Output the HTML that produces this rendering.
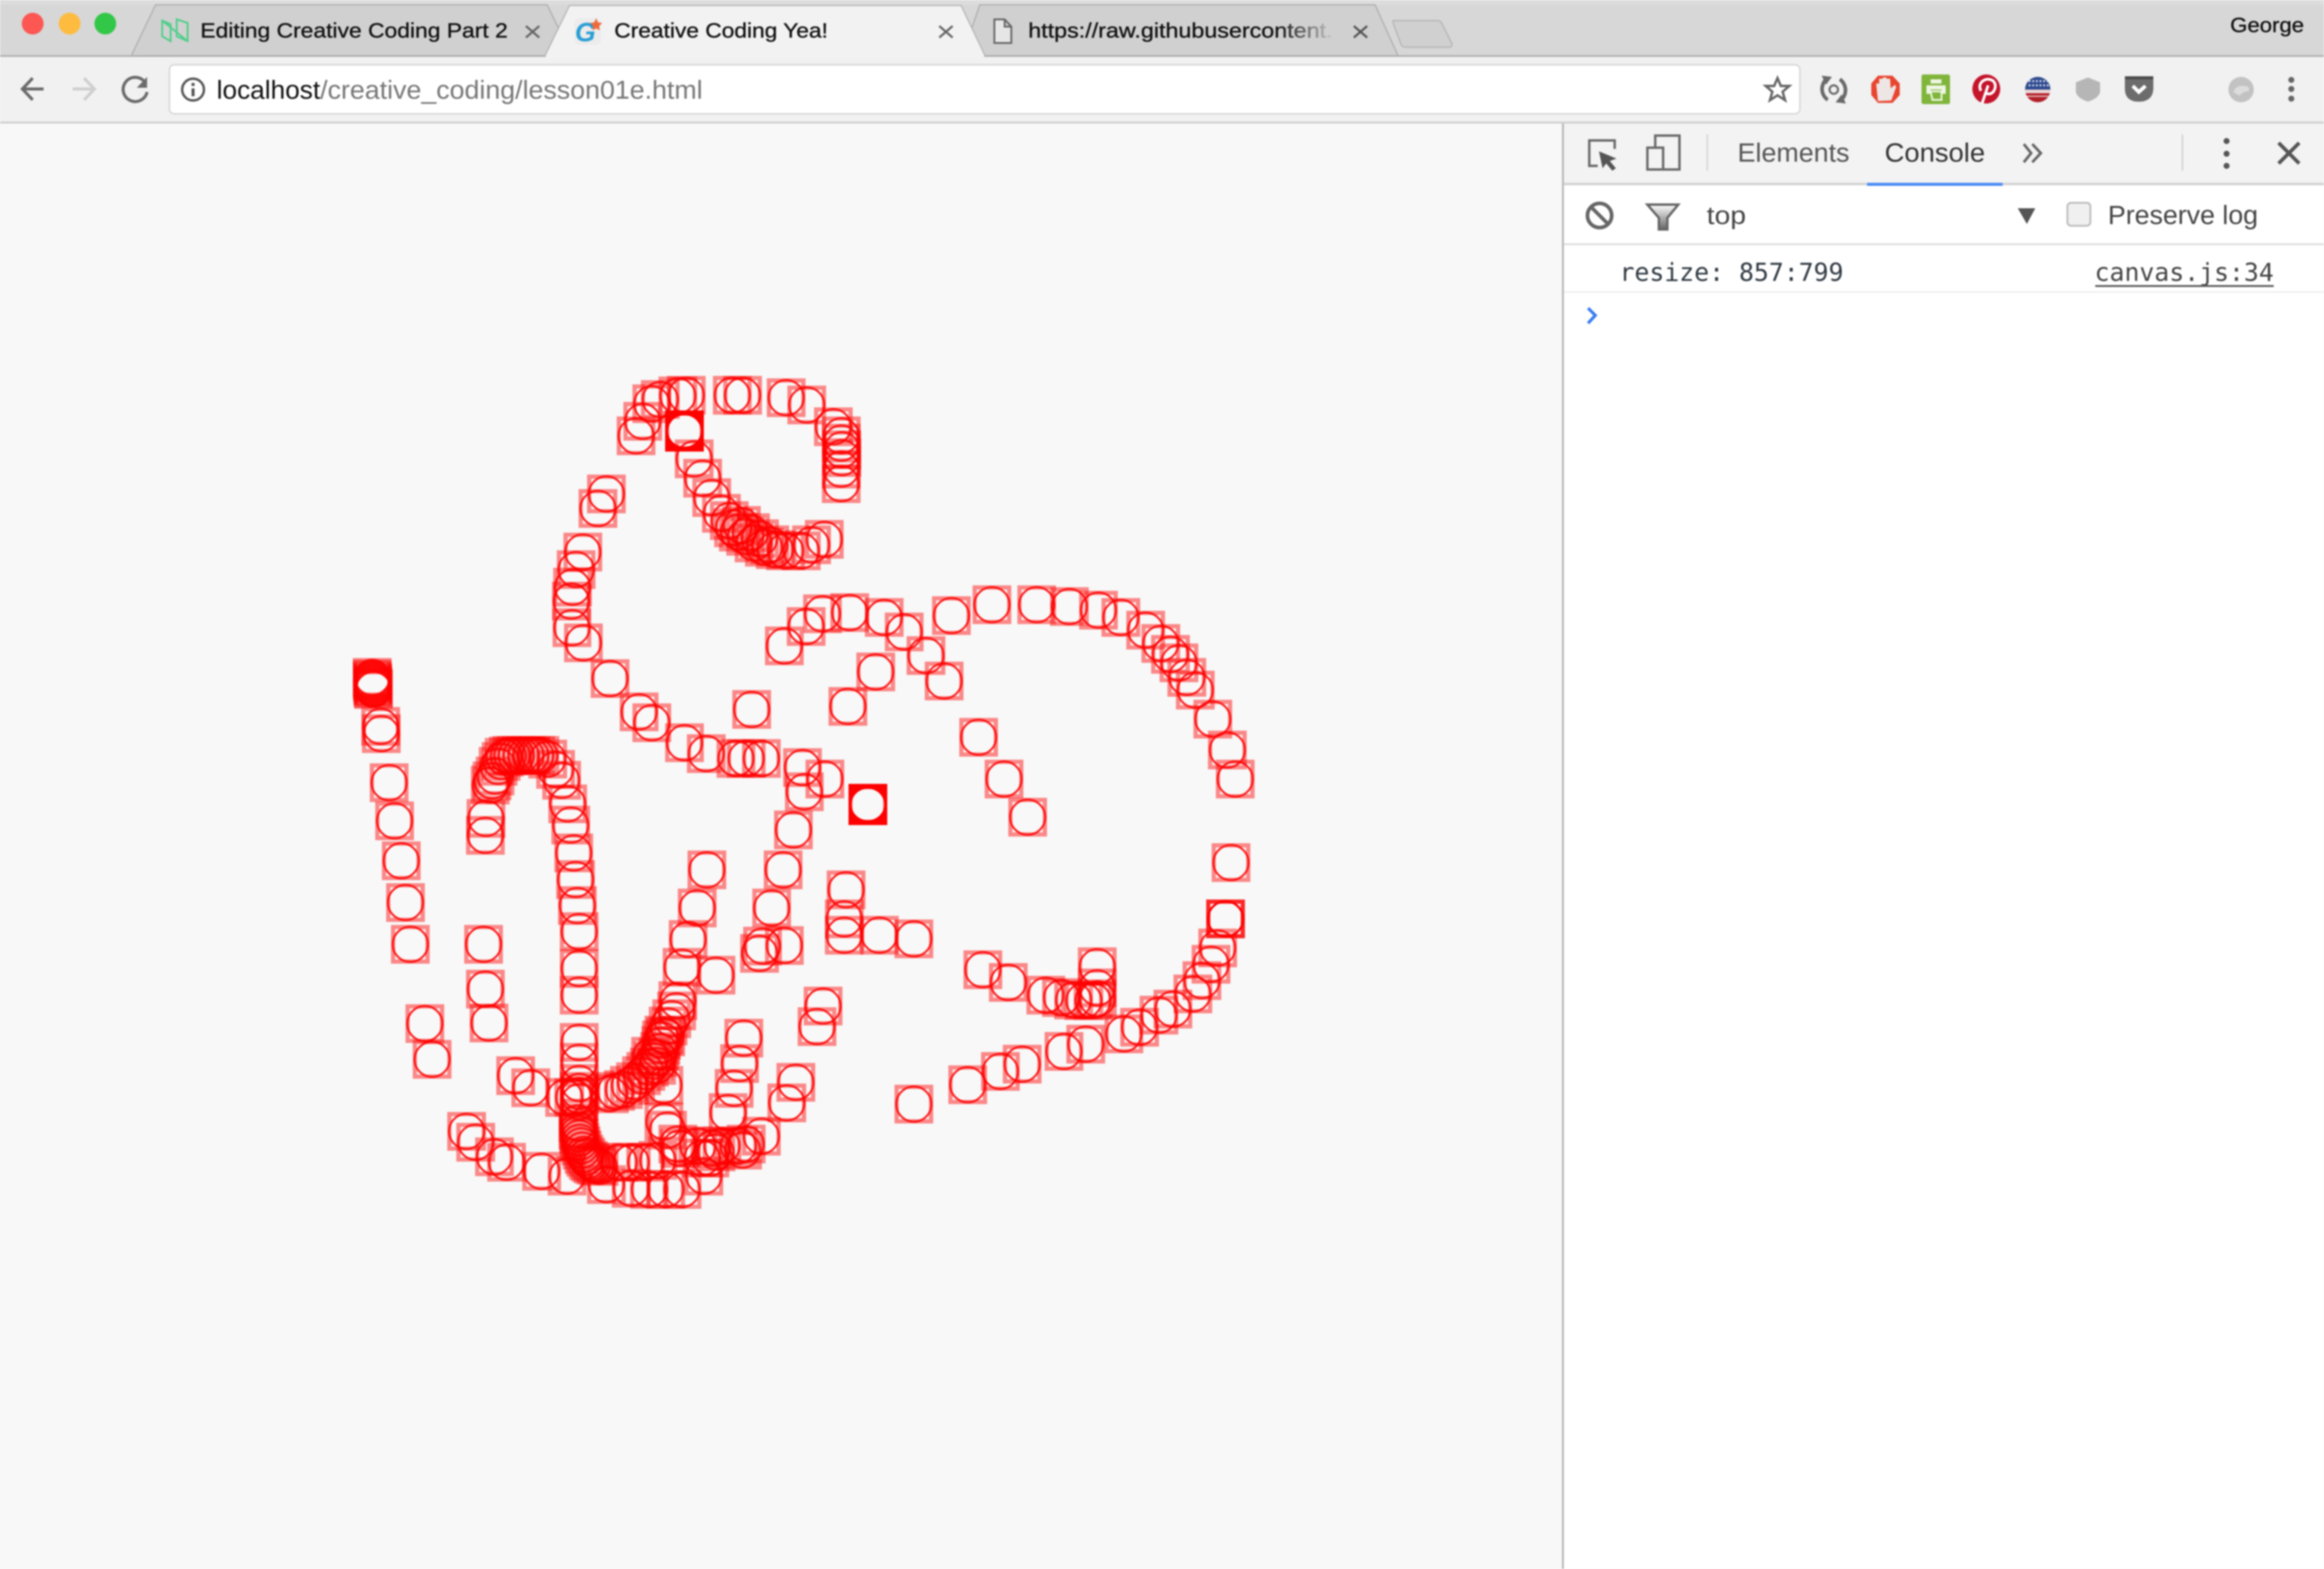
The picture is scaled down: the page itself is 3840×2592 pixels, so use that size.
<!DOCTYPE html>
<html><head><meta charset="utf-8"><title>Creative Coding Yea!</title>
<style>
html,body{margin:0;padding:0;background:#f8f8f8;width:3840px;height:2592px;overflow:hidden}
svg{display:block;filter:blur(1.2px)}
text{font-family:"Liberation Sans",sans-serif}
.mono{font-family:"DejaVu Sans Mono","Liberation Mono",monospace}
.t{stroke:#111;stroke-width:.5px}
</style></head><body>
<svg xmlns="http://www.w3.org/2000/svg" width="3840" height="2592" viewBox="0 0 3840 2592">
<defs>
<g id="m"><rect x="-28.5" y="-28.5" width="57" height="57" fill="none" stroke="#ff0000" stroke-opacity=".45" stroke-width="7"/><circle r="29" fill="none" stroke="#ff0000" stroke-opacity=".85" stroke-width="3.5"/></g>
<path id="b" fill-rule="evenodd" fill="#ff0000" d="M-32 -34 H32 V34 H-32 Z M-27 0 A27 26 0 1 0 27 0 A27 26 0 1 0 -27 0 Z"/>
<linearGradient id="fade" gradientUnits="userSpaceOnUse" x1="2110" x2="2205" y1="0" y2="0"><stop offset="0" stop-color="#111"/><stop offset="1" stop-color="#111" stop-opacity="0"/></linearGradient>
<linearGradient id="fn" x1="0" y1="0" x2="0" y2="1"><stop offset="0" stop-color="#fff"/><stop offset="1" stop-color="#666"/></linearGradient>
<clipPath id="us"><circle cx="3367" cy="148" r="21"/></clipPath>
</defs>

<!-- page background -->
<rect width="3840" height="2592" fill="#f8f8f8"/>

<!-- tab strip -->
<rect width="3840" height="93" fill="#d7d7d7"/>
<rect y="0" width="3840" height="8" fill="#dcdcdc"/>
<rect y="91" width="3840" height="3" fill="#b2b2b2"/>
<rect y="94" width="3840" height="108" fill="#f1f1f1"/>
<rect y="201" width="3840" height="3" fill="#cdcdcd"/>

<!-- traffic lights -->
<circle cx="54" cy="39" r="18" fill="#fc5753"/>
<circle cx="115" cy="39" r="18" fill="#fdbc40"/>
<circle cx="174" cy="39" r="18" fill="#33c748"/>

<!-- tabs -->
<path d="M217 92 L257 8 H904 L945 92 Z" fill="#d0d0d0" stroke="#adadad" stroke-width="2"/>
<path d="M1590 92 L1619 8 H2272 L2310 92 Z" fill="#d0d0d0" stroke="#adadad" stroke-width="2"/>
<path d="M900 93 L941 9 H1588 L1628 93 Z" fill="#f2f2f2" stroke="#b5b5b5" stroke-width="2"/>
<rect x="902" y="91" width="724" height="4" fill="#f2f2f2"/>
<path d="M2302 34 H2375 Q2381 34 2383 40 L2399 72 Q2400 78 2394 78 H2322 Q2317 78 2315 73 L2302 39 Z" fill="#d0d0d0" stroke="#b3b3b3" stroke-width="2"/>

<!-- favicon 1 -->
<g fill="none" stroke="#4fce8a" stroke-width="3"><path d="M268 34 V60 L282 68 V40 Z"/><path d="M310 38 V68 L292 60 V32 Z"/><path d="M268 34 L310 68"/></g>
<text class="t" x="331" y="62" font-size="34" fill="#111" textLength="508" lengthAdjust="spacingAndGlyphs">Editing Creative Coding Part 2</text>
<path d="M869 43 L891 62 M891 43 L869 62" stroke="#666" stroke-width="3.5"/>

<!-- favicon 2 -->
<rect x="949" y="30" width="44" height="44" rx="8" fill="#ececec"/>
<text x="950" y="68" font-size="44" font-weight="bold" font-style="italic" fill="#2a9fd6">G</text>
<path d="M985 30 l3 7 7 1 -5 5 1 7 -6 -3 -6 3 1 -7 -5 -5 7 -1z" fill="#ef6a3a"/>
<text class="t" x="1015" y="62" font-size="34" fill="#111" textLength="353" lengthAdjust="spacingAndGlyphs">Creative Coding Yea!</text>
<path d="M1552 43 L1574 62 M1574 43 L1552 62" stroke="#666" stroke-width="3.5"/>

<!-- tab 3 -->
<path d="M1643 32 H1660 L1671 44 V71 H1643 Z M1660 32 V44 H1671" fill="#e6e6e6" stroke="#666" stroke-width="3"/>
<text x="1699" y="62" font-size="34" fill="url(#fade)" stroke="url(#fade)" stroke-width=".5" textLength="522" lengthAdjust="spacingAndGlyphs">https://raw.githubusercontent.c</text>
<path d="M2237 43 L2259 62 M2259 43 L2237 62" stroke="#555" stroke-width="3.5"/>
<text class="t" x="3685" y="53" font-size="34" fill="#111" textLength="122" lengthAdjust="spacingAndGlyphs">George</text>

<!-- nav buttons -->
<path d="M72 147 H39 M54 129 L37 147 L54 165" fill="none" stroke="#6b6b6b" stroke-width="5"/>
<path d="M120 147 H154 M139 129 L156 147 L139 165" fill="none" stroke="#cfcfcf" stroke-width="5"/>
<path d="M238 134 A20 20 0 1 0 243 152" fill="none" stroke="#6b6b6b" stroke-width="5"/>
<path d="M243 127 V145 H226 Z" fill="#6b6b6b"/>

<!-- omnibox -->
<rect x="280" y="107" width="2694" height="81" rx="8" fill="#fff" stroke="#d6d6d6" stroke-width="2.5"/>
<circle cx="319" cy="148" r="18" fill="none" stroke="#555" stroke-width="4"/>
<rect x="316.500" y="146" width="5" height="13" fill="#555"/><rect x="316.500" y="137" width="5" height="5" fill="#555"/>
<text x="358" y="163" font-size="43" fill="#111" textLength="171" lengthAdjust="spacingAndGlyphs">localhost</text>
<text x="529" y="163" font-size="43" fill="#777" textLength="632" lengthAdjust="spacingAndGlyphs">/creative_coding/lesson01e.html</text>
<path d="M2937 129 l5.500 13 h14 l-11 9.500 4 14 -12.500 -8 -12.500 8 4 -14 -11 -9.500 h14z" fill="none" stroke="#666" stroke-width="4"/>

<!-- extensions -->
<g fill="none" stroke="#6a6a6a" stroke-width="6"><path d="M3020 129 A22 22 0 0 0 3020 165"/><path d="M3040 167 A22 22 0 0 0 3040 131"/><circle cx="3030" cy="148" r="7" stroke-width="3.500"/></g>
<path d="M3010 125 l17 2 -10 13z M3050 171 l-17 -2 10 -13z" fill="#6a6a6a"/>
<path d="M3103 125 H3127 L3139 138 V157 L3127 170 H3103 L3092 157 V138 Z" fill="#e8452f"/>
<path d="M3103 167 L3100 138 H3105 V130 H3111 V128 H3117 V130 H3123 L3124 146 L3131 140 L3133 144 L3125 166 Z" fill="#eee6e4"/>
<rect x="3175" y="123" width="47" height="49" rx="3" fill="#7fb53a"/>
<path d="M3190 131 H3208 V138 H3190 Z M3183 141 H3215 V155 H3208 V148 H3190 V155 H3183 Z" fill="#eef5e4"/>
<path d="M3190 151 H3208 V165 H3193 Z" fill="none" stroke="#eef5e4" stroke-width="3"/>
<ellipse cx="3282" cy="147" rx="23" ry="24" fill="#c5142c"/>
<path d="M3275 171 L3285 141" stroke="#fff" stroke-width="4.500" fill="none"/>
<path d="M3273 150 C3267 137 3279 130 3286 131 C3298 132 3299 144 3294 151 C3289 157 3283 156 3281 152" stroke="#fff" stroke-width="4.500" fill="none"/>
<g clip-path="url(#us)">
<rect x="3340" y="120" width="60" height="30" fill="#2f4a8f"/>
<rect x="3340" y="148" width="60" height="6" fill="#ead6d6"/>
<rect x="3340" y="154" width="60" height="16" fill="#b3202a"/>
<rect x="3340" y="158" width="60" height="2" fill="#e8c8c8"/>
<path d="M3352 141 h36" stroke="#dfe5f2" stroke-width="3" stroke-dasharray="3 3"/>
<path d="M3352 134 h36" stroke="#dfe5f2" stroke-width="3" stroke-dasharray="3 3"/>
</g>
<path d="M3450 128 L3470 136 V152 Q3468 162 3450 168 Q3432 162 3430 152 V136 Z" fill="#b6b6b6"/>
<path d="M3511 130 Q3511 126 3515 126 H3554 Q3558 126 3558 130 V148 Q3556 168 3534 168 Q3512 168 3511 148 Z" fill="#6c6c6c"/>
<rect x="3511" y="126" width="47" height="5" fill="#4b4b4b"/>
<path d="M3524 142 L3534 152 L3545 142" fill="none" stroke="#fff" stroke-width="6"/>
<circle cx="3703" cy="148" r="21" fill="#c2c2c2"/>
<path d="M3690 152 Q3695 140 3708 142 Q3718 142 3716 150 Q3706 152 3700 158 Z" fill="#dcdcdc"/>
<circle cx="3786" cy="132" r="5" fill="#666"/><circle cx="3786" cy="147" r="5" fill="#666"/><circle cx="3786" cy="163" r="5" fill="#666"/>

<!-- canvas markers -->
<g id="markers">
<use href="#m" x="1051" y="720"/><use href="#m" x="1062" y="696"/><use href="#m" x="1077" y="667"/><use href="#m" x="1091" y="660"/><use href="#m" x="1120" y="654"/><use href="#m" x="1134" y="653"/>
<use href="#m" x="1210" y="653"/><use href="#m" x="1227" y="653"/><use href="#m" x="1299" y="657"/><use href="#m" x="1333" y="669"/><use href="#m" x="1377" y="705"/><use href="#m" x="1390" y="720"/><use href="#m" x="1390" y="732"/><use href="#m" x="1391" y="743"/><use href="#m" x="1391" y="756"/><use href="#m" x="1390" y="775"/><use href="#m" x="1390" y="799"/>
<use href="#b" x="1131" y="712"/><use href="#m" x="1131" y="712"/>
<use href="#m" x="1147" y="758"/><use href="#m" x="1161" y="790"/><use href="#m" x="1176" y="822"/><use href="#m" x="1192" y="848"/><use href="#m" x="1205" y="860"/><use href="#m" x="1212" y="872"/><use href="#m" x="1220" y="879"/><use href="#m" x="1225" y="868"/><use href="#m" x="1232" y="886"/><use href="#m" x="1240" y="880"/><use href="#m" x="1246" y="897"/><use href="#m" x="1255" y="890"/><use href="#m" x="1263" y="904"/><use href="#m" x="1272" y="900"/><use href="#m" x="1281" y="908"/><use href="#m" x="1298" y="910"/><use href="#m" x="1324" y="910"/><use href="#m" x="1341" y="900"/><use href="#m" x="1362" y="891"/>
<use href="#m" x="1002" y="816"/><use href="#m" x="988" y="840"/><use href="#m" x="963" y="912"/><use href="#m" x="952" y="941"/><use href="#m" x="946" y="970"/><use href="#m" x="944" y="993"/><use href="#m" x="945" y="1037"/><use href="#m" x="964" y="1062"/><use href="#m" x="1008" y="1121"/><use href="#m" x="1056" y="1176"/><use href="#m" x="1077" y="1194"/><use href="#m" x="1131" y="1227"/><use href="#m" x="1167" y="1245"/><use href="#m" x="1216" y="1253"/><use href="#m" x="1233" y="1253"/><use href="#m" x="1258" y="1253"/><use href="#m" x="1326" y="1268"/><use href="#m" x="1363" y="1287"/><use href="#m" x="1329" y="1308"/>
<use href="#b" x="1434" y="1329"/><use href="#m" x="1434" y="1329"/>
<use href="#m" x="1311" y="1371"/><use href="#m" x="1294" y="1437"/><use href="#m" x="1275" y="1500"/><use href="#m" x="1296" y="1562"/><use href="#m" x="1260" y="1563"/><use href="#m" x="1255" y="1575"/>
<use href="#m" x="1168" y="1437"/><use href="#m" x="1152" y="1500"/><use href="#m" x="1137" y="1552"/><use href="#m" x="1127" y="1598"/><use href="#m" x="1183" y="1611"/>
<use href="#m" x="1296" y="1067"/><use href="#m" x="1332" y="1035"/><use href="#m" x="1359" y="1014"/><use href="#m" x="1404" y="1012"/><use href="#m" x="1461" y="1020"/><use href="#m" x="1494" y="1044"/><use href="#m" x="1530" y="1083"/><use href="#m" x="1560" y="1125"/><use href="#m" x="1447" y="1110"/><use href="#m" x="1401" y="1167"/><use href="#m" x="1242" y="1172"/>
<use href="#m" x="1572" y="1017"/><use href="#m" x="1639" y="999"/><use href="#m" x="1713" y="999"/><use href="#m" x="1767" y="1002"/><use href="#m" x="1815" y="1008"/><use href="#m" x="1852" y="1020"/><use href="#m" x="1893" y="1041"/><use href="#m" x="1918" y="1063"/><use href="#m" x="1934" y="1081"/><use href="#m" x="1948" y="1095"/><use href="#m" x="1961" y="1119"/><use href="#m" x="1975" y="1140"/><use href="#m" x="2004" y="1188"/><use href="#m" x="2028" y="1239"/><use href="#m" x="2041" y="1287"/>
<use href="#m" x="1617" y="1218"/><use href="#m" x="1659" y="1287"/><use href="#m" x="1698" y="1350"/><use href="#m" x="2034" y="1425"/><use href="#m" x="2025" y="1518"/><use href="#m" x="2025" y="1518"/><use href="#m" x="2025" y="1518"/><use href="#m" x="2012" y="1566"/><use href="#m" x="2001" y="1593"/><use href="#m" x="1986" y="1620"/><use href="#m" x="1971" y="1642"/><use href="#m" x="1938" y="1667"/><use href="#m" x="1915" y="1677"/><use href="#m" x="1883" y="1697"/><use href="#m" x="1857" y="1708"/><use href="#m" x="1794" y="1725"/><use href="#m" x="1758" y="1737"/><use href="#m" x="1689" y="1758"/><use href="#m" x="1653" y="1770"/><use href="#m" x="1599" y="1792"/><use href="#m" x="1510" y="1824"/>
<use href="#m" x="1624" y="1602"/><use href="#m" x="1666" y="1623"/><use href="#m" x="1728" y="1644"/><use href="#m" x="1754" y="1648"/><use href="#m" x="1774" y="1652"/><use href="#m" x="1791" y="1653"/><use href="#m" x="1806" y="1653"/><use href="#m" x="1813" y="1597"/><use href="#m" x="1813" y="1632"/><use href="#m" x="1813" y="1650"/>
<use href="#m" x="1360" y="1662"/><use href="#m" x="1350" y="1696"/><use href="#m" x="1510" y="1551"/><use href="#m" x="1453" y="1545"/><use href="#m" x="1395" y="1545"/><use href="#m" x="1398" y="1470"/><use href="#m" x="1395" y="1518"/>
<use href="#m" x="1315" y="1788"/><use href="#m" x="1300" y="1822"/><use href="#m" x="1229" y="1715"/><use href="#m" x="1222" y="1757"/><use href="#m" x="1213" y="1798"/><use href="#m" x="1203" y="1838"/>
<use href="#m" x="615" y="1119"/><use href="#m" x="615" y="1122"/><use href="#m" x="615" y="1125"/><use href="#m" x="616" y="1128"/><use href="#m" x="616" y="1131"/><use href="#m" x="616" y="1134"/><use href="#m" x="617" y="1137"/><use href="#m" x="617" y="1139"/>
<use href="#m" x="629" y="1200"/><use href="#m" x="630" y="1212"/><use href="#m" x="643" y="1293"/><use href="#m" x="652" y="1356"/><use href="#m" x="663" y="1422"/><use href="#m" x="670" y="1491"/><use href="#m" x="678" y="1560"/>
<use href="#m" x="799" y="1560"/><use href="#m" x="802" y="1634"/><use href="#m" x="808" y="1690"/><use href="#m" x="702" y="1691"/><use href="#m" x="714" y="1750"/><use href="#m" x="852" y="1777"/><use href="#m" x="877" y="1797"/><use href="#m" x="771" y="1869"/><use href="#m" x="786" y="1887"/><use href="#m" x="817" y="1911"/><use href="#m" x="837" y="1920"/><use href="#m" x="895" y="1935"/><use href="#m" x="937" y="1943"/>
<use href="#m" x="803" y="1352"/><use href="#m" x="802" y="1380"/><use href="#m" x="810" y="1297"/><use href="#m" x="813" y="1290"/><use href="#m" x="818" y="1282"/><use href="#m" x="823" y="1266"/><use href="#m" x="828" y="1258"/><use href="#m" x="833" y="1251"/><use href="#m" x="840" y="1249"/><use href="#m" x="846" y="1248"/><use href="#m" x="853" y="1248"/><use href="#m" x="861" y="1248"/><use href="#m" x="869" y="1248"/><use href="#m" x="877" y="1248"/><use href="#m" x="885" y="1248"/><use href="#m" x="892" y="1248"/><use href="#m" x="905" y="1254"/><use href="#m" x="918" y="1271"/><use href="#m" x="928" y="1289"/><use href="#m" x="938" y="1328"/><use href="#m" x="943" y="1363"/><use href="#m" x="948" y="1409"/><use href="#m" x="951" y="1453"/><use href="#m" x="954" y="1496"/><use href="#m" x="957" y="1539"/><use href="#m" x="957" y="1600"/><use href="#m" x="957" y="1644"/>
<use href="#m" x="957" y="1722"/><use href="#m" x="957" y="1755"/><use href="#m" x="957" y="1790"/><use href="#m" x="957" y="1803"/><use href="#m" x="957" y="1810"/><use href="#m" x="957" y="1820"/><use href="#m" x="948" y="1813"/><use href="#m" x="933" y="1813"/>
<use href="#m" x="955" y="1855"/><use href="#m" x="955" y="1867"/><use href="#m" x="956" y="1873"/><use href="#m" x="957" y="1880"/><use href="#m" x="958" y="1887"/><use href="#m" x="960" y="1893"/><use href="#m" x="962" y="1900"/><use href="#m" x="965" y="1907"/><use href="#m" x="968" y="1912"/><use href="#m" x="972" y="1917"/><use href="#m" x="976" y="1920"/><use href="#m" x="980" y="1923"/><use href="#m" x="985" y="1925"/><use href="#m" x="990" y="1927"/>
<use href="#m" x="1002" y="1957"/><use href="#m" x="1043" y="1963"/><use href="#m" x="1073" y="1965"/><use href="#m" x="1100" y="1965"/><use href="#m" x="1127" y="1965"/><use href="#m" x="1163" y="1943"/>
<use href="#m" x="1023" y="1920"/><use href="#m" x="1043" y="1920"/><use href="#m" x="1067" y="1920"/><use href="#m" x="1087" y="1917"/>
<use href="#m" x="1007" y="1807"/><use href="#m" x="1017" y="1803"/><use href="#m" x="1030" y="1800"/><use href="#m" x="1040" y="1793"/><use href="#m" x="1050" y="1787"/><use href="#m" x="1060" y="1777"/><use href="#m" x="1067" y="1770"/><use href="#m" x="1073" y="1763"/><use href="#m" x="1080" y="1753"/><use href="#m" x="1075" y="1745"/><use href="#m" x="1085" y="1760"/><use href="#m" x="1087" y="1747"/><use href="#m" x="1090" y="1737"/><use href="#m" x="1092" y="1727"/><use href="#m" x="1093" y="1718"/><use href="#m" x="1097" y="1710"/><use href="#m" x="1100" y="1713"/><use href="#m" x="1104" y="1695"/><use href="#m" x="1110" y="1683"/><use href="#m" x="1118" y="1670"/><use href="#m" x="1120" y="1653"/>
<use href="#m" x="1097" y="1793"/><use href="#m" x="1097" y="1853"/><use href="#m" x="1103" y="1867"/><use href="#m" x="1123" y="1897"/><use href="#m" x="1120" y="1890"/>
<use href="#m" x="1153" y="1893"/><use href="#m" x="1177" y="1897"/><use href="#m" x="1183" y="1903"/><use href="#m" x="1173" y="1913"/><use href="#m" x="1193" y="1893"/><use href="#m" x="1220" y="1893"/><use href="#m" x="1233" y="1890"/><use href="#m" x="1258" y="1877"/><use href="#m" x="1227" y="1900"/><use href="#m" x="1160" y="1913"/>
</g>

<!-- devtools -->
<rect x="2581" y="204" width="3" height="2388" fill="#b4b4b4"/>
<rect x="2584" y="204" width="1256" height="2388" fill="#fff"/>
<rect x="2584" y="204" width="1256" height="100" fill="#f3f3f3"/>
<rect x="2584" y="302" width="1256" height="4" fill="#d2d2d2"/>
<rect x="3085" y="302" width="224" height="5" fill="#4c8bf5"/>

<path d="M2668 246 V232 H2626 V274 H2640" fill="none" stroke="#6a6a6a" stroke-width="4"/>
<path d="M2642 250 L2671 262 L2660 266 L2670 278 L2664 282 L2654 270 L2648 278 Z" fill="#555"/>
<path d="M2735 243 V224 H2775 V280 H2748" fill="none" stroke="#6a6a6a" stroke-width="4"/>
<rect x="2722" y="244" width="26" height="36" fill="none" stroke="#6a6a6a" stroke-width="4"/>
<rect x="2820" y="222" width="2" height="60" fill="#cfcfcf"/>
<text x="2871" y="267" font-size="44" fill="#555" textLength="185" lengthAdjust="spacingAndGlyphs">Elements</text>
<text x="3114" y="267" font-size="44" fill="#333" textLength="166" lengthAdjust="spacingAndGlyphs">Console</text>
<path d="M3344 238 L3356 253 L3344 268 M3358 238 L3372 253 L3358 268" fill="none" stroke="#666" stroke-width="4.5"/>
<rect x="3605" y="222" width="2" height="60" fill="#c8c8c8"/>
<circle cx="3679" cy="233" r="5" fill="#555"/><circle cx="3679" cy="254" r="5" fill="#555"/><circle cx="3679" cy="274" r="5" fill="#555"/>
<path d="M3765 236 L3799 270 M3799 236 L3765 270" stroke="#555" stroke-width="6"/>

<circle cx="2643" cy="356" r="20" fill="none" stroke="#666" stroke-width="6"/>
<path d="M2629 342 L2657 370" stroke="#666" stroke-width="6"/>
<path d="M2722 338 H2773 L2755 360 V379 H2741 V360 Z" fill="url(#fn)" stroke="#666" stroke-width="4"/>
<text x="2820" y="370" font-size="42" fill="#444" textLength="65" lengthAdjust="spacingAndGlyphs">top</text>
<path d="M3334 344 H3363 L3349 370 Z" fill="#555"/>
<rect x="3416" y="335" width="38" height="38" rx="6" fill="#f0f0f0" stroke="#bcbcbc" stroke-width="3"/>
<text x="3483" y="370" font-size="44" fill="#444" textLength="248" lengthAdjust="spacingAndGlyphs">Preserve log</text>
<rect x="2584" y="402" width="1256" height="3" fill="#dedede"/>

<text class="mono" x="2676" y="464" font-size="41" fill="#303942" textLength="370" lengthAdjust="spacingAndGlyphs">resize: 857:799</text>
<text class="mono" x="3461" y="464" font-size="41" fill="#444" textLength="296" lengthAdjust="spacingAndGlyphs">canvas.js:34</text>
<rect x="3462" y="471" width="295" height="3" fill="#555"/>
<rect x="2584" y="481" width="1256" height="3" fill="#f0f0f0"/>
<path d="M2624 509 L2636 521 L2624 534" fill="none" stroke="#367cf1" stroke-width="5"/>
</svg>
</body></html>
